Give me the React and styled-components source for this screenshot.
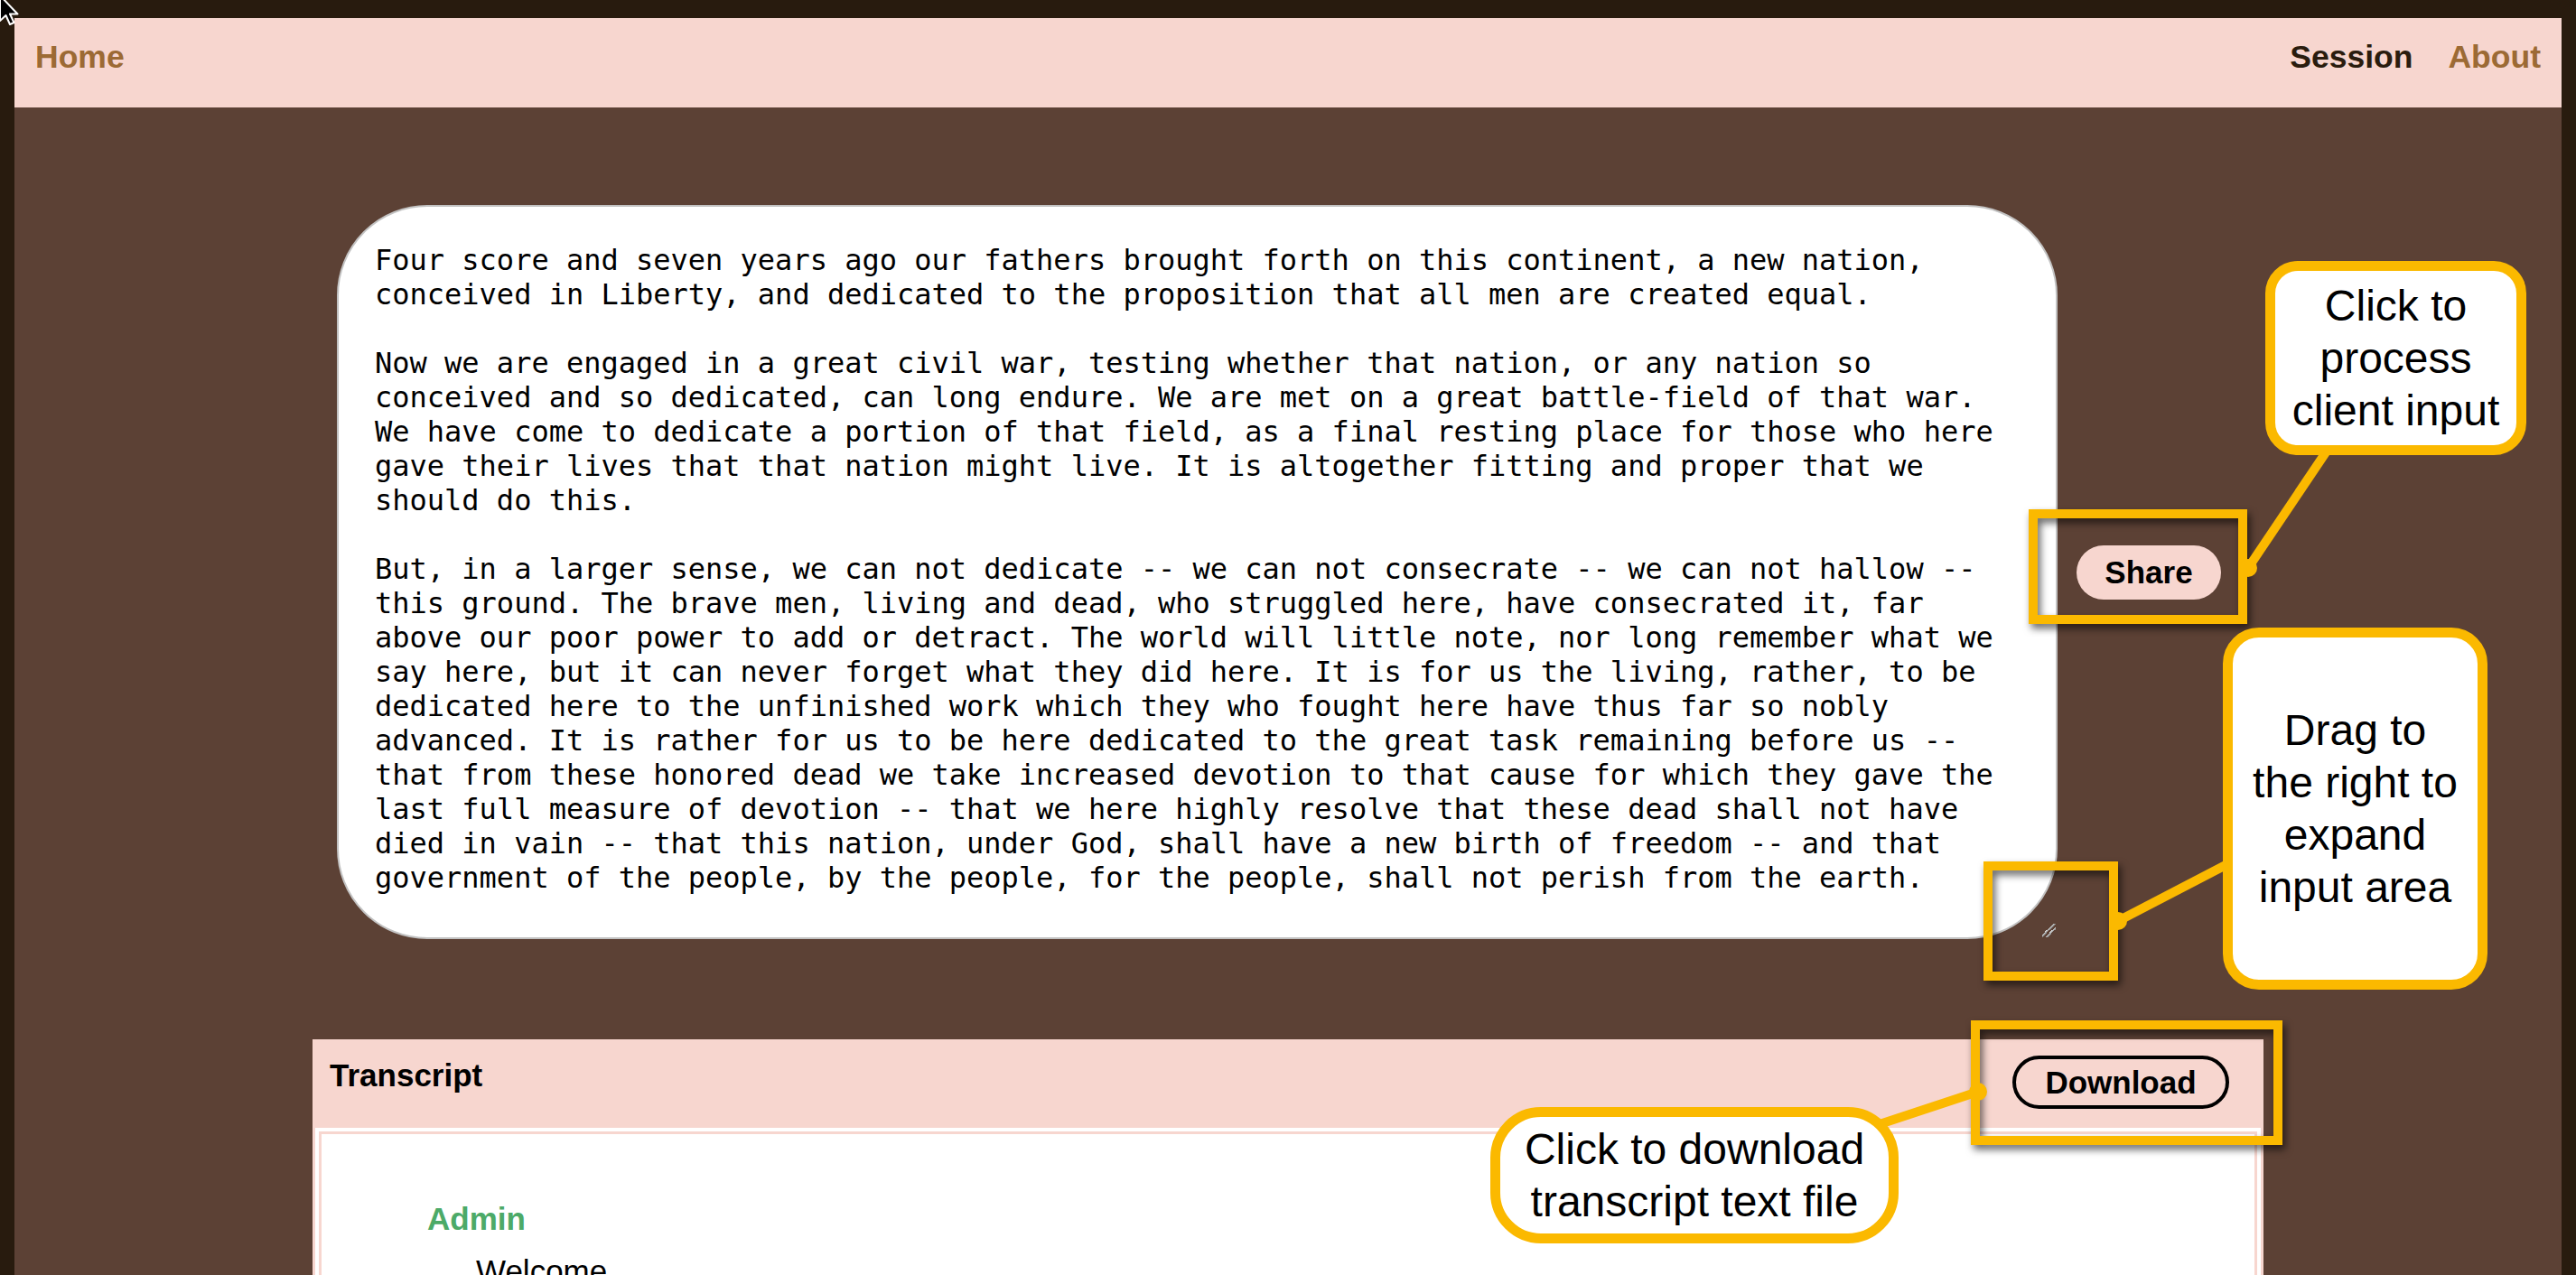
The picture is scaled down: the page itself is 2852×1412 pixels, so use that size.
import React from 'react';
import styled, { createGlobalStyle } from 'styled-components';

const GlobalStyle = createGlobalStyle`
  html, body {
    margin: 0;
    padding: 0;
    background: #281b0e;
  }
  body {
    font-family: "Liberation Sans", Arial, Helvetica, sans-serif;
  }
  * {
    box-sizing: border-box;
  }
`;

const speech = `Four score and seven years ago our fathers brought forth on this continent, a new nation, conceived in Liberty, and dedicated to the proposition that all men are created equal.

Now we are engaged in a great civil war, testing whether that nation, or any nation so conceived and so dedicated, can long endure. We are met on a great battle-field of that war. We have come to dedicate a portion of that field, as a final resting place for those who here gave their lives that that nation might live. It is altogether fitting and proper that we should do this.

But, in a larger sense, we can not dedicate -- we can not consecrate -- we can not hallow -- this ground. The brave men, living and dead, who struggled here, have consecrated it, far above our poor power to add or detract. The world will little note, nor long remember what we say here, but it can never forget what they did here. It is for us the living, rather, to be dedicated here to the unfinished work which they who fought here have thus far so nobly advanced. It is rather for us to be here dedicated to the great task remaining before us -- that from these honored dead we take increased devotion to that cause for which they gave the last full measure of devotion -- that we here highly resolve that these dead shall not have died in vain -- that this nation, under God, shall have a new birth of freedom -- and that government of the people, by the people, for the people, shall not perish from the earth.`;

const Shell = styled.div`
    position: relative;
    min-height: 100vh;
    padding: 20px 16px 0;
    background: #281b0e;
    overflow: hidden;
`;

const Page = styled.div`
    min-height: calc(100vh - 20px);
    background: #5c4135;
    display: flex;
    flex-direction: column;
`;

const Nav = styled.nav`
    height: 99px;
    background: #f7d6cf;
    display: flex;
    align-items: center;
    justify-content: space-between;
    padding: 0 23px 13px;
`;

const NavRight = styled.div`
    display: flex;
    gap: 39px;
`;

const NavLink = styled.a`
    font-weight: 700;
    font-size: 35.5px;
    line-height: 41px;
    color: ${p => (p.$active ? '#2a1c0e' : '#9c6a34')};
    text-decoration: none;
`;

const Main = styled.main`
    padding-top: 108px;
    display: flex;
    flex-direction: column;
    align-items: center;
`;

const InputRow = styled.div`
    align-self: stretch;
    display: flex;
    align-items: center;
    justify-content: center;
    gap: 21px;
    padding-right: 20px;
`;

const Input = styled.textarea`
    width: 1905px;
    height: 813px;
    padding: 40px 59px 40px 40px;
    border: 2px solid #c2c2c2;
    border-radius: 100px;
    background: #fff;
    color: #000;
    font-family: "DejaVu Sans Mono", monospace;
    font-size: 32px;
    line-height: 38px;
    resize: horizontal;
    overflow: hidden;
    outline: none;

    &::-webkit-resizer {
        background: linear-gradient(
            135deg,
            transparent 40%,
            #d8d8d8 40%,
            #8a8a8a 50%,
            transparent 50%,
            transparent 60%,
            #d8d8d8 60%,
            #8a8a8a 70%,
            transparent 70%
        );
    }
`;

const ShareButton = styled.button`
    width: 160px;
    height: 60px;
    padding: 0;
    border: none;
    border-radius: 30px;
    background: #f7d6cf;
    color: #000;
    font-family: "Liberation Sans", Arial, sans-serif;
    font-weight: 700;
    font-size: 35px;
`;

const Panel = styled.section`
    width: 2160px;
    margin-top: 111px;
    border: 3px solid #f7d6cf;
    background: #fff;
`;

const PanelHeader = styled.div`
    height: 95px;
    background: #f7d6cf;
    display: flex;
    align-items: center;
    justify-content: space-between;
    padding: 0 35px 0 16px;
`;

const PanelTitle = styled.h2`
    margin: 0 0 21px;
    font-size: 35px;
    line-height: 40px;
    font-weight: 700;
    color: #000;
`;

const DownloadButton = styled.button`
    width: 240px;
    height: 59px;
    margin-bottom: 6px;
    padding: 0;
    border: 4px solid #000;
    border-radius: 30px;
    background: transparent;
    color: #000;
    font-family: "Liberation Sans", Arial, sans-serif;
    font-weight: 700;
    font-size: 35px;
`;

const PanelBody = styled.div`
    padding: 4px;
`;

const TranscriptBox = styled.div`
    min-height: 400px;
    border: 3px solid #f7d6cf;
    padding: 74px 0 0 117px;
`;

const Speaker = styled.div`
    font-size: 35px;
    line-height: 40px;
    font-weight: 700;
    color: #4caa68;
`;

const Message = styled.div`
    margin: 18px 0 0 54px;
    font-size: 35px;
    line-height: 40px;
    color: #000;
`;

/* annotation layer drawn over the screenshot */
const Overlay = styled.div`
    position: absolute;
    inset: 0;
    pointer-events: none;
`;

const Frame = styled.div`
    position: absolute;
    left: ${p => p.$x}px;
    top: ${p => p.$y}px;
    width: ${p => p.$w}px;
    height: ${p => p.$h}px;
    border: 10px solid #fbb900;
    filter: drop-shadow(3px 5px 4px rgba(0, 0, 0, 0.6));
`;

const Callout = styled.div`
    position: absolute;
    left: ${p => p.$x}px;
    top: ${p => p.$y}px;
    width: ${p => p.$w}px;
    height: ${p => p.$h}px;
    border: 11px solid #fbb900;
    border-radius: ${p => p.$r}px;
    background: #fff;
    display: flex;
    align-items: center;
    justify-content: center;
    text-align: center;
    color: #000;
    font-family: "Liberation Sans", Arial, sans-serif;
    font-size: 48px;
    line-height: 58px;
`;

const Connectors = styled.svg`
    position: absolute;
    left: 0;
    top: 0;
`;

const Cursor = styled.svg`
    position: absolute;
    left: -3px;
    top: -8px;
`;

const links = [
    { from: [2489, 629], to: [2577, 498] },
    { from: [2345, 1020], to: [2468, 956] },
    { from: [2190, 1209], to: [2078, 1246] },
];

function Annotations() {
    return (
        <Overlay>
            <Frame $x={2246} $y={564} $w={242} $h={127} />
            <Frame $x={2196} $y={954} $w={149} $h={132} />
            <Frame $x={2182} $y={1130} $w={345} $h={138} />
            <Connectors width="2852" height="1412" viewBox="0 0 2852 1412">
                {links.map((l, i) => (
                    <g key={i}>
                        <line
                            x1={l.from[0]}
                            y1={l.from[1]}
                            x2={l.to[0]}
                            y2={l.to[1]}
                            stroke="#fbb900"
                            strokeWidth="10"
                        />
                        <circle cx={l.from[0]} cy={l.from[1]} r="10" fill="#fbb900" />
                    </g>
                ))}
            </Connectors>
            <Callout $x={2508} $y={289} $w={289} $h={215} $r={36}>
                Click to<br />process<br />client input
            </Callout>
            <Callout $x={2461} $y={695} $w={293} $h={401} $r={40}>
                Drag to<br />the right to<br />expand<br />input area
            </Callout>
            <Callout $x={1650} $y={1226} $w={452} $h={151} $r={56}>
                Click to download<br />transcript text file
            </Callout>
            <Cursor width="26" height="40" viewBox="0 0 26 40">
                <path d="M3 3 L3 31 L9.5 25 L14 35 L18.5 33 L14 23.5 L22.5 23.5 Z" fill="#000" stroke="#fff" strokeWidth="2" strokeLinejoin="round" />
            </Cursor>
        </Overlay>
    );
}

export default function App() {
    return (
        <Shell>
            <GlobalStyle />
            <Page>
                <Nav>
                    <NavLink href="#">Home</NavLink>
                    <NavRight>
                        <NavLink href="#" $active>Session</NavLink>
                        <NavLink href="#">About</NavLink>
                    </NavRight>
                </Nav>
                <Main>
                    <InputRow>
                        <Input defaultValue={speech} spellCheck={false} />
                        <ShareButton>Share</ShareButton>
                    </InputRow>
                    <Panel>
                        <PanelHeader>
                            <PanelTitle>Transcript</PanelTitle>
                            <DownloadButton>Download</DownloadButton>
                        </PanelHeader>
                        <PanelBody>
                            <TranscriptBox>
                                <Speaker>Admin</Speaker>
                                <Message>Welcome</Message>
                            </TranscriptBox>
                        </PanelBody>
                    </Panel>
                </Main>
            </Page>
            <Annotations />
        </Shell>
    );
}
